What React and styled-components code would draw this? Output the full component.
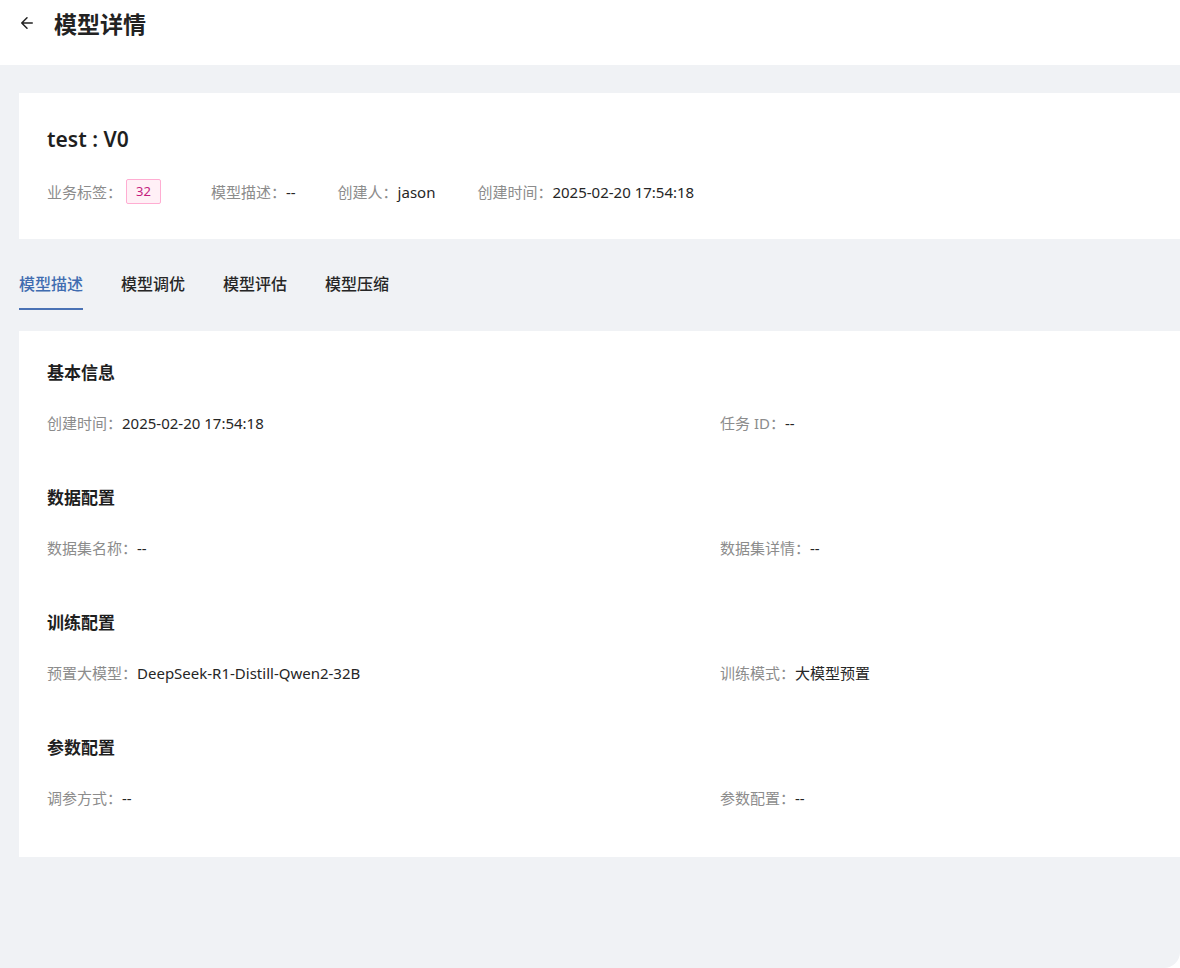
import React from "react";
import styled, { createGlobalStyle } from "styled-components";

const G = createGlobalStyle`
  html,body{margin:0;background:#fff;}
  body{font-family:"Noto Sans","Noto Sans CJK SC",sans-serif;color:#1f1f1f;}
`;
const Header = styled.div`height:65px;display:flex;align-items:center;padding-left:18px;gap:18px;box-sizing:border-box;padding-bottom:20px;`;
const Title = styled.h1`margin:0;font-size:23px;font-weight:700;color:#222;`;
const Body = styled.div`background:#f0f2f5;height:903px;border-bottom-right-radius:16px;padding:28px 0 0 19px;box-sizing:border-box;`;
const Card = styled.div`background:#fff;padding:${p=>p.$p};`;
const Name = styled.div`font-size:21px;font-weight:600;line-height:28px;margin-bottom:26px;`;
const Meta = styled.div`display:flex;align-items:center;font-size:15px;`;
const MItem = styled.div`display:flex;align-items:center;margin-right:${p=>p.$mr}px;`;
const Label = styled.span`color:#8c8c8c;`;
const Val = styled.span`color:#262626;`;
const Tag = styled.span`border:1px solid #ffadd2;background:#fff0f6;color:#c41d7f;font-size:13px;padding:0 9px;line-height:23px;border-radius:2px;margin-left:4px;`;
const Tabs = styled.div`display:flex;gap:38px;height:92px;align-items:flex-start;padding-top:33px;box-sizing:border-box;`;
const Tab = styled.div`font-size:16px;font-weight:500;color:${p=>p.$a?"#3f6cb0":"#262626"};padding-bottom:12px;border-bottom:${p=>p.$a?"2px solid #4a72b5":"2px solid transparent"};height:24px;line-height:24px;`;
const Section = styled.div`margin-bottom:${p=>p.$last?0:"52px"};`;
const H = styled.div`font-size:17px;font-weight:700;line-height:24px;margin-bottom:27px;`;
const Row = styled.div`display:grid;grid-template-columns:673px 1fr;font-size:15px;line-height:22px;`;

const sections=[
  ["基本信息",["创建时间：","2025-02-20 17:54:18"],["任务 ID：","--"]],
  ["数据配置",["数据集名称：","--"],["数据集详情：","--"]],
  ["训练配置",["预置大模型：","DeepSeek-R1-Distill-Qwen2-32B"],["训练模式：","大模型预置"]],
  ["参数配置",["调参方式：","--"],["参数配置：","--"]],
];

export default function App(){
  return <>
    <G/>
    <Header>
      <svg width="18" height="18" viewBox="0 0 24 24" fill="none" stroke="#222" strokeWidth="2" strokeLinecap="round" strokeLinejoin="round"><path d="M19 12H5M12 19l-7-7 7-7"/></svg>
      <Title>模型详情</Title>
    </Header>
    <Body>
      <Card $p="32px 28px 35px 28px">
        <Name>test : V0</Name>
        <Meta>
          <MItem $mr={50}><Label>业务标签：</Label><Tag>32</Tag></MItem>
          <MItem $mr={42}><Label>模型描述：</Label><Val>--</Val></MItem>
          <MItem $mr={42}><Label>创建人：</Label><Val>jason</Val></MItem>
          <MItem $mr={0}><Label>创建时间：</Label><Val>2025-02-20 17:54:18</Val></MItem>
        </Meta>
      </Card>
      <Tabs>
        {["模型描述","模型调优","模型评估","模型压缩"].map((t,i)=><Tab key={t} $a={i===0}>{t}</Tab>)}
      </Tabs>
      <Card $p="30px 28px 48px 28px">
        {sections.map((s,i)=><Section key={s[0]} $last={i===3}>
          <H>{s[0]}</H>
          <Row>
            <div><Label>{s[1][0]}</Label><Val>{s[1][1]}</Val></div>
            <div><Label>{s[2][0]}</Label><Val>{s[2][1]}</Val></div>
          </Row>
        </Section>)}
      </Card>
    </Body>
  </>;
}
